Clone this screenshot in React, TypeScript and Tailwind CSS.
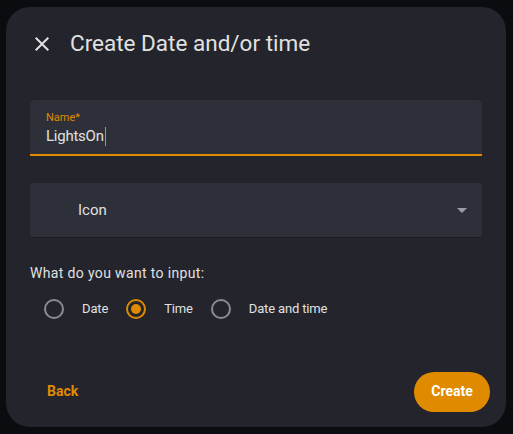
import React from 'react';

const options = [
  { label: 'Date', checked: false },
  { label: 'Time', checked: true },
  { label: 'Date and time', checked: false },
];

function Radio({ label, checked }: { label: string; checked: boolean }) {
  return (
    <label className="flex items-center">
      <span className="flex h-10 w-10 items-center justify-center">
        <span
          className={
            checked
              ? 'flex h-5 w-5 items-center justify-center rounded-full border-2 border-[#e08a00]'
              : 'flex h-5 w-5 items-center justify-center rounded-full border-2 border-[#8b8c93]'
          }
        >
          {checked && <span className="h-2.5 w-2.5 rounded-full bg-[#e08a00]" />}
        </span>
      </span>
      <span className="ml-[8px] mr-[8px] text-[13px] tracking-[-0.15px] text-[#e1e1e1]">{label}</span>
    </label>
  );
}

export default function App() {
  return (
    <div
      className="h-[434px] w-[513px] bg-[#0b0c0f] pt-[7px] pl-[6px]"
      style={{ fontFamily: 'Roboto, "Liberation Sans", sans-serif' }}
    >
      <div className="flex h-[420px] w-[500px] flex-col rounded-[24px] bg-[#23242c]">
        <div className="flex h-[72px] items-center pt-[1px] pl-[24px]">
          <svg width="24" height="24" viewBox="0 0 24 24" className="text-[#e1e1e1]">
            <path
              fill="currentColor"
              d="M19 6.41 17.59 5 12 10.59 6.41 5 5 6.41 10.59 12 5 17.59 6.41 19 12 13.41 17.59 19 19 17.59 13.41 12z"
            />
          </svg>
          <h1 className="ml-[16px] text-[22.5px] text-[#e1e1e1]">Create Date and/or time</h1>
        </div>

        <div className="mt-[21px] px-[24px]">
          <div className="relative h-[56px] rounded-t-[4px] bg-[#2d3038] px-[16px] pt-[11px]">
            <div className="text-[11px] leading-[14px] text-[#e08a00]">Name*</div>
            <div className="flex items-center text-[15px] leading-[22px] tracking-[-0.25px] text-[#e1e1e1]">
              LightsOn
              <span className="ml-[1px] h-[19px] w-[1px] bg-[#e08a00]" />
            </div>
            <div className="absolute right-0 bottom-0 left-0 h-[2px] bg-[#e08a00]" />
          </div>

          <div className="mt-[27px] flex h-[55px] items-center justify-between rounded-t-[4px] border-b border-[#1c1d23] bg-[#2d3038] pr-[15px] pl-[48px]">
            <span className="text-[15px] text-[#e1e1e1]">Icon</span>
            <svg width="10" height="5" viewBox="0 0 10 5">
              <path d="M0 0 L5 5 L10 0 Z" fill="#9a9ca5" />
            </svg>
          </div>

          <div className="mt-[25px] text-[14px] tracking-[0.35px] text-[#e1e1e1]">What do you want to input:</div>
          <div className="mt-[5px] flex items-center pl-[4px]">
            {options.map((o) => (
              <Radio key={o.label} label={o.label} checked={o.checked} />
            ))}
          </div>
        </div>

        <div className="mt-auto mb-[15px] flex items-center justify-between pr-[16px] pl-[24px]">
          <button className="px-[17px] py-[10px] text-[14px] font-bold text-[#e08a00]">Back</button>
          <button className="h-[40px] w-[76px] rounded-full bg-[#e08a00] text-[14px] font-bold text-white">
            Create
          </button>
        </div>
      </div>
    </div>
  );
}
